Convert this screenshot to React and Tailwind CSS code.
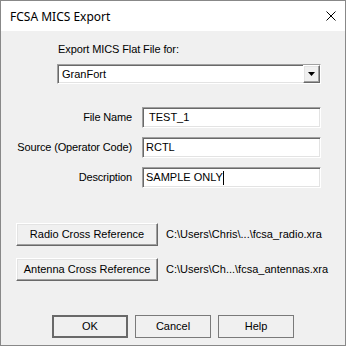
import React from 'react';

const sunken =
  'bg-white border border-t-[#a0a0a0] border-l-[#a0a0a0] border-r-[#fff] border-b-[#fff] shadow-[inset_1px_1px_0_#696969,inset_-1px_-1px_0_#e3e3e3]';
const raised =
  'bg-[#f0f0f0] border border-t-[#fff] border-l-[#fff] border-r-[#696969] border-b-[#696969] shadow-[inset_-1px_-1px_0_#a0a0a0,inset_1px_1px_0_#e3e3e3]';

function Field({ label, value, pad = 'pl-[3px]', caret }) {
  return (
    <div className="flex items-center h-[21px]">
      <div className="w-[131px] text-right tracking-[-0.15px]">{label}</div>
      <div className={`ml-[10px] w-[179px] h-[21px] flex items-center ${sunken} ${pad}`}>
        <span>{value}</span>
        {caret && <span className="w-px h-[14px] bg-black" />}
      </div>
    </div>
  );
}

function PushButton({ children, width = 'w-[142px]' }) {
  return (
    <div className={`${width} h-[23px] flex items-center justify-center ${raised}`}>{children}</div>
  );
}

export default function App() {
  return (
    <div
      className="w-[346px] h-[346px] bg-[#f0f0f0] border border-[#888] flex flex-col text-[11px] text-black leading-[13px]"
      style={{ fontFamily: '"Liberation Sans", Arial, sans-serif' }}
    >
      <div className="h-[30px] bg-white flex items-center justify-between pl-[9px] pr-[9px]">
        <span className="text-[12px]" style={{ fontFamily: '"Noto Sans", "Open Sans", sans-serif' }}>
          FCSA MICS Export
        </span>
        <svg width="10" height="10" viewBox="0 0 10 10">
          <path d="M0.5 0.5 L9.5 9.5 M9.5 0.5 L0.5 9.5" stroke="#000" strokeWidth="1" />
        </svg>
      </div>

      <div className="flex flex-col">
        <div className="mt-[12px] ml-[57px] tracking-[-0.1px]">Export MICS Flat File for:</div>

        <div className={`mt-[8px] ml-[56px] w-[264px] h-[20px] flex items-center justify-between ${sunken}`}>
          <span className="pl-[4px]">GranFort</span>
          <div className={`w-[17px] h-[18px] flex items-center justify-center ${raised}`}>
            <svg width="7" height="4" viewBox="0 0 7 4">
              <path d="M0 0 H7 L3.5 4 Z" fill="#000" />
            </svg>
          </div>
        </div>

        <div className="mt-[23px] flex flex-col gap-[9px]">
          <Field label="File Name" value="TEST_1" pad="pl-[6px]" />
          <Field label="Source (Operator Code)" value="RCTL" />
          <Field label="Description" value="SAMPLE ONLY" caret />
        </div>

        <div className="mt-[35px] ml-[15px] flex items-center gap-[8px]">
          <PushButton>Radio Cross Reference</PushButton>
          <span>C:\Users\Chris\...\fcsa_radio.xra</span>
        </div>
        <div className="mt-[12px] ml-[15px] flex items-center gap-[8px]">
          <PushButton>Antenna Cross Reference</PushButton>
          <span>C:\Users\Ch...\fcsa_antennas.xra</span>
        </div>

        <div className="mt-[34px] ml-[51px] flex gap-[7px]">
          <div className="w-[76px] h-[23px] flex items-center justify-center bg-[#f0f0f0] border-2 border-[#696969]">
            OK
          </div>
          <div className="w-[76px] h-[23px] flex items-center justify-center bg-[#f0f0f0] border border-[#7a7a7a]">
            Cancel
          </div>
          <div className="w-[76px] h-[23px] flex items-center justify-center bg-[#f0f0f0] border border-[#7a7a7a]">
            Help
          </div>
        </div>
      </div>
    </div>
  );
}
